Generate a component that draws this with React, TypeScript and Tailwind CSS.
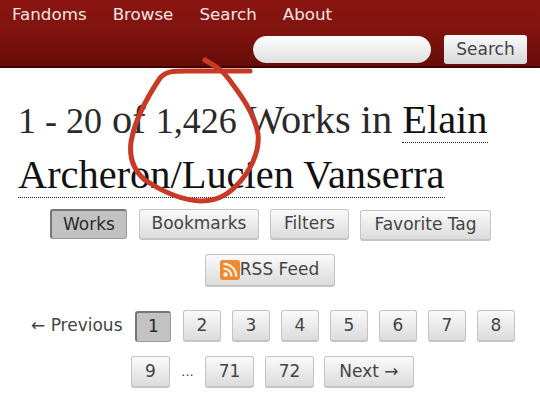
const sans = "font-['DejaVu_Sans',sans-serif]";

const btn =
  "inline-flex items-center justify-center rounded-[3px] border border-[#c4c4c4] border-b-[2px] bg-gradient-to-b from-[#fafafa] to-[#dcdcdc] text-[#444]";
const active =
  "inline-flex items-center justify-center rounded-[3px] border border-[#9a9a9a] border-l-[2px] border-t-[2px] border-l-[#777] border-t-[#777] bg-[#c2c2c2] text-[#2a2a2a]";

function RssIcon() {
  return (
    <svg width="20" height="20" viewBox="0 0 20 20" className="shrink-0">
      <rect width="20" height="20" rx="3" fill="#ef8a32" />
      <circle cx="5.5" cy="14.5" r="2.2" fill="#fff3e6" />
      <path d="M3.5 8.5a8 8 0 0 1 8 8" fill="none" stroke="#fff3e6" strokeWidth="2.2" />
      <path d="M3.5 3.8a12.7 12.7 0 0 1 12.7 12.7" fill="none" stroke="#fff3e6" strokeWidth="2.2" />
    </svg>
  );
}

export default function App() {
  const pages = ["2", "3", "4", "5", "6", "7", "8"];

  return (
    <div className={`relative h-[412px] w-[540px] overflow-hidden bg-white ${sans}`}>
      <header className="h-[68px] border-b-[2px] border-[#3a0503] bg-gradient-to-b from-[#8a1510] via-[#80130f] to-[#660c08]">
        <nav className="flex gap-[26px] pl-[12px] pt-[3px] text-[16.7px] leading-[23px] text-[#f3e6e2]">
          <a>Fandoms</a>
          <a>Browse</a>
          <a>Search</a>
          <a>About</a>
        </nav>
        <div className="mt-[9px] flex items-center pl-[253px]">
          <div className="h-[27px] w-[178px] rounded-full bg-gradient-to-b from-[#ffffff] to-[#dedede]" />
          <div className="ml-[13px] flex h-[29px] w-[83px] items-center justify-center rounded-[3px] bg-gradient-to-b from-[#fafafa] to-[#d8d8d8] text-[17px] text-[#444]">
            Search
          </div>
        </div>
      </header>

      <h2 className="pl-[18px] pr-[30px] pt-[25px] font-['Liberation_Serif',serif] text-[40.4px] leading-[54px] text-[#2a2a2a]">
        <span className="text-[36px]">1 - 20</span> of <span className="text-[36px]">1,426</span> Works in{" "}
        <a className="border-b border-dotted border-[#222] text-[#111]">Elain Archeron/Lucien Vanserra</a>
      </h2>

      <div className="mt-[7px] flex h-[32px] items-start pl-[50px] text-[17px]">
        <span className={`${active} h-[30px] w-[77px]`}>Works</span>
        <span className={`${btn} ml-[12px] h-[31px] w-[120px]`}>Bookmarks</span>
        <span className={`${btn} ml-[11px] h-[31px] w-[79px]`}>Filters</span>
        <span className={`${btn} ml-[11px] mt-[1px] h-[31px] w-[131px]`}>Favorite Tag</span>
      </div>

      <div className="mt-[13px] flex justify-center pr-[1px] text-[17px]">
        <span className={`${btn} h-[33px] w-[130px] gap-0`}>
          <RssIcon />
          RSS Feed
        </span>
      </div>

      <div className="mt-[23px] flex items-center pl-[31px] text-[17px] text-[#444]">
        <span className="w-[104px]">← Previous</span>
        <span className={`${active} h-[31px] w-[36px]`}>1</span>
        <div className="ml-[12px] flex gap-[11px]">
          {pages.map((p) => (
            <span key={p} className={`${btn} h-[32px] w-[38px]`}>
              {p}
            </span>
          ))}
        </div>
      </div>

      <div className="mt-[14px] flex items-center pl-[131px] text-[17px] text-[#444]">
        <span className={`${btn} h-[32px] w-[39px]`}>9</span>
        <span className="w-[35px] text-center text-[13px]">...</span>
        <span className={`${btn} h-[32px] w-[49px]`}>71</span>
        <span className={`${btn} ml-[11px] h-[32px] w-[49px]`}>72</span>
        <span className={`${btn} ml-[10px] h-[32px] w-[90px]`}>Next →</span>
      </div>

      {/* hand drawn circle on top of the screenshot */}
      <svg className="pointer-events-none absolute left-0 top-0" width="540" height="412">
        <path
          d="M205 60 C215 66 222 70 228 78 C240 94 254 112 258 134 C260 152 250 172 236 186 C226 196 216 201 200 201 C180 200 160 190 145 180 C133 170 129 158 131 142 C135 118 148 96 160 78 C166 71 174 71 186 71 L250 71"
          fill="none"
          stroke="#c83a25"
          strokeWidth="5"
          strokeLinecap="round"
          strokeLinejoin="round"
        />
      </svg>
    </div>
  );
}
